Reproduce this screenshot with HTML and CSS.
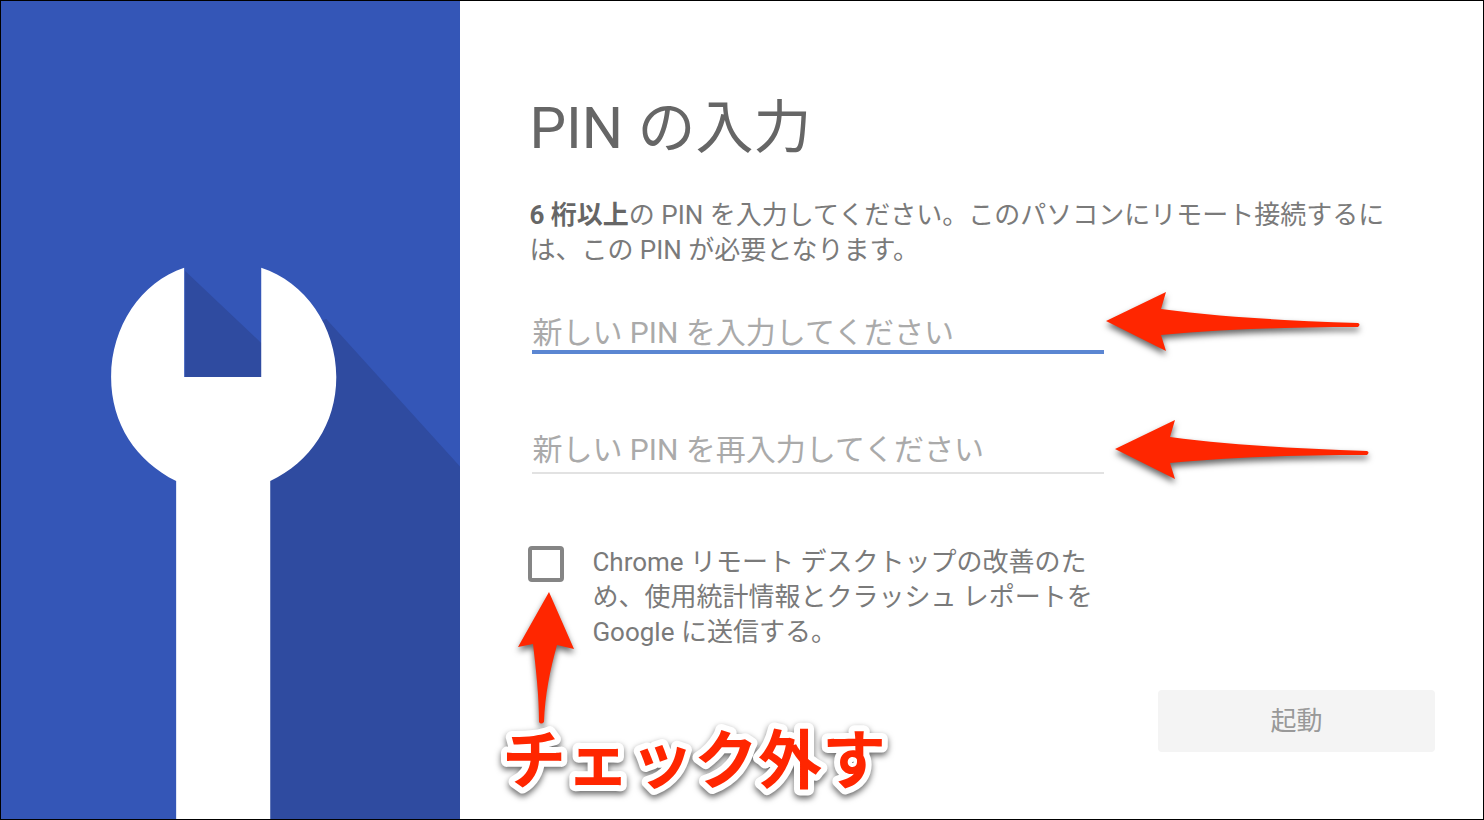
FILE: index.html
```html
<!DOCTYPE html>
<html lang="ja">
<head>
<meta charset="utf-8">
<meta name="viewport" content="width=device-width, initial-scale=1">
<title>PIN の入力</title>
<link rel="stylesheet" href="styles.css">
</head>
<body class="window">
  <aside class="banner">
    <svg class="banner-art" viewBox="0 0 459 818" preserveAspectRatio="xMidYMid slice" aria-hidden="true">
      <path class="banner-shade" d="M184 270L260 342L325 318L459 466V818H184Z"/>
      <path class="banner-wrench" d="M183 267V376H260V267C304 281 335 326 335 376C335 423 309 461 269 480V818H175V480C135 460 110 423 110 376C110 326 140 281 183 267Z"/>
    </svg>
  </aside>
  <main class="content">
    <h1 class="title">PIN の入力</h1>
    <p class="intro"><strong>6 桁以上</strong>の PIN を入力してください。このパソコンにリモート接続するには、この PIN が必要となります。</p>
    <form class="form">
      <div class="field">
        <input class="field-input field-input-active" type="password" aria-label="新しい PIN" placeholder="新しい PIN を入力してください">
        <svg class="arrow arrow-first" viewBox="0 0 260 68" aria-hidden="true"><path d="M0 30L60 1L55 18C115 26 185 30 252 32Q255 33 252 36C185 36 115 38 55 44L60 60Z"/></svg>
      </div>
      <div class="field">
        <input class="field-input" type="password" aria-label="新しい PIN の再入力" placeholder="新しい PIN を再入力してください">
        <svg class="arrow arrow-second" viewBox="0 0 260 68" aria-hidden="true"><path d="M0 30L60 1L55 18C115 26 185 30 252 32Q255 33 252 36C185 36 115 38 55 44L60 60Z"/></svg>
      </div>
      <div class="consent">
        <input class="consent-box" type="checkbox" id="stats">
        <label class="consent-text" for="stats">Chrome リモート デスクトップの改善のため、使用統計情報とクラッシュ レポートを Google に送信する。</label>
        <div class="note">
          <svg class="note-arrow" viewBox="0 0 70 140" aria-hidden="true"><path d="M36 2L61 59L44 55C37 80 32 105 31 132Q28 135 26 132C26 105 23 80 20 54L5 57Z"/></svg>
          <svg class="note-label" viewBox="0 0 384 84"><text class="note-text" x="2" y="71">チェック外す</text></svg>
        </div>
      </div>
      <div class="actions">
        <button class="start" type="submit" disabled>起動</button>
      </div>
    </form>
  </main>
</body>
</html>
```

FILE: styles.css
```css
* {
  box-sizing: border-box;
}

.window {
  display: flex;
  min-height: 100vh;
  margin: 0;
  border: 1px solid #000;
  background: #fff;
  color: #7a7a7a;
  font-family: Roboto, "Noto Sans CJK JP", sans-serif;
  font-size: 26px;
  line-height: 35px;
}

.banner {
  position: relative;
  flex: 0 0 31%;
  background: #3456b7;
}

.banner-art {
  position: absolute;
  inset: 0;
  width: 100%;
  height: 100%;
}

.banner-shade {
  fill: #2f4ba0;
}

.banner-wrench {
  fill: #fff;
}

.content {
  flex: 1;
  min-width: 0;
  padding: 89px 48px 48px 69px;
}

.title {
  margin: 0;
  color: #666;
  font-size: 58px;
  font-weight: 400;
  line-height: 76px;
}

.intro {
  max-width: 868px;
  margin: 32px 0 0;
}

.intro strong {
  color: #666;
  font-weight: 700;
}

.form {
  display: flex;
  flex-direction: column;
  margin-top: 48px;
}

.field {
  position: relative;
  max-width: 572px;
  margin-left: 3px;
}

.field + .field {
  margin-top: 78px;
}

.field-input {
  display: block;
  width: 100%;
  height: 42px;
  padding: 0 0 6px;
  border: 0;
  border-bottom: 2px solid #e2e2e2;
  border-radius: 0;
  outline: 0;
  background: none;
  color: #7a7a7a;
  font-family: inherit;
  font-size: 30px;
}

.field-input::placeholder {
  color: #aaa;
  opacity: 1;
}

.field-input-active {
  height: 38px;
  padding-bottom: 1px;
  border-bottom: 4px solid #5b86d2;
}

.arrow,
.note-arrow {
  fill: #ff2600;
  filter: drop-shadow(0 4px 3px rgba(0, 0, 0, 0.6));
}

.arrow {
  position: absolute;
  width: 260px;
  height: 68px;
}

.arrow-first {
  top: -25px;
  left: calc(100% + 2px);
}

.arrow-second {
  top: -13px;
  left: calc(100% + 11px);
}

.consent {
  position: relative;
  display: flex;
  align-items: flex-start;
  gap: 28px;
  margin-top: 64px;
}

.consent-box {
  flex: none;
  width: 36px;
  height: 36px;
  margin: 8px 0 0 -1px;
  border: 4px solid #858585;
  border-radius: 4px;
  appearance: none;
  background: #fff;
}

.consent-text {
  max-width: 508px;
  padding-top: 7px;
}

.note {
  position: absolute;
  top: 52px;
  left: -29px;
  display: flex;
  flex-direction: column;
}

.note-arrow {
  width: 70px;
  height: 140px;
  margin-left: 13px;
}

.note-label {
  width: 384px;
  height: 84px;
  margin-top: -18px;
  overflow: visible;
  filter: drop-shadow(0 3px 3px rgba(0, 0, 0, 0.6));
}

.note-text {
  fill: #ff2600;
  stroke: #fff;
  stroke-width: 12px;
  stroke-linejoin: round;
  paint-order: stroke fill;
  font-family: "Noto Sans CJK JP", sans-serif;
  font-size: 64px;
  font-weight: 700;
}

.actions {
  display: flex;
  justify-content: flex-end;
  margin-top: 40px;
}

.start {
  width: 277px;
  height: 62px;
  border: 0;
  border-radius: 4px;
  background: #f4f4f4;
  color: #999;
  font: inherit;
}
```
